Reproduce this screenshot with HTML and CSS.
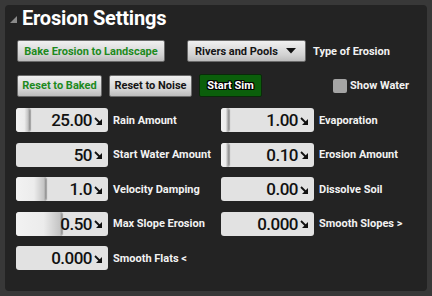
FILE: index.html
```html
<!DOCTYPE html>
<html>
<head>
<meta charset="utf-8">
<link rel="stylesheet" href="styles.css">
</head>
<body>
<div class="panel">
  <div class="title">
    <svg class="tri" width="7" height="7" viewBox="0 0 7 7"><polygon points="7,0 7,7 0,7" fill="#8a8a8a"/></svg>
    <span>Erosion Settings</span>
  </div>
  <div class="row row1">
    <button class="btn green bake">Bake Erosion to Landscape</button>
    <div class="dropdown"><span>Rivers and Pools</span><svg width="10" height="6" viewBox="0 0 10 6"><polygon points="0,0 10,0 5,5.5" fill="#111"/></svg></div>
    <span class="lbl">Type of Erosion</span>
  </div>
  <div class="row row2">
    <button class="btn green rb">Reset to Baked</button>
    <button class="btn rn">Reset to Noise</button>
    <button class="sim">Start Sim</button>
    <span class="check"></span>
    <span class="lbl">Show Water</span>
  </div>
  <div class="fields">
    <div class="field"><div class="box"><div class="thumb" style="width:14px"></div><span class="val">25.00</span><svg class="ic" width="8" height="8" viewBox="0 0 8 8"><path d="M1 1 L6 6" stroke="#111" stroke-width="1.8"/><polygon points="8,2 8,8 2,8" fill="#111"/></svg></div><span class="lbl">Rain Amount</span></div>
    <div class="field"><div class="box"><div class="thumb" style="width:8px"></div><span class="val">1.00</span><svg class="ic" width="8" height="8" viewBox="0 0 8 8"><path d="M1 1 L6 6" stroke="#111" stroke-width="1.8"/><polygon points="8,2 8,8 2,8" fill="#111"/></svg></div><span class="lbl">Evaporation</span></div>
    <div class="field"><div class="box"><span class="val">50</span><svg class="ic" width="8" height="8" viewBox="0 0 8 8"><path d="M1 1 L6 6" stroke="#111" stroke-width="1.8"/><polygon points="8,2 8,8 2,8" fill="#111"/></svg></div><span class="lbl">Start Water Amount</span></div>
    <div class="field"><div class="box"><div class="thumb" style="width:8px"></div><span class="val">0.10</span><svg class="ic" width="8" height="8" viewBox="0 0 8 8"><path d="M1 1 L6 6" stroke="#111" stroke-width="1.8"/><polygon points="8,2 8,8 2,8" fill="#111"/></svg></div><span class="lbl">Erosion Amount</span></div>
    <div class="field"><div class="box"><div class="thumb" style="width:30px"></div><span class="val">1.0</span><svg class="ic" width="8" height="8" viewBox="0 0 8 8"><path d="M1 1 L6 6" stroke="#111" stroke-width="1.8"/><polygon points="8,2 8,8 2,8" fill="#111"/></svg></div><span class="lbl">Velocity Damping</span></div>
    <div class="field"><div class="box"><span class="val">0.00</span><svg class="ic" width="8" height="8" viewBox="0 0 8 8"><path d="M1 1 L6 6" stroke="#111" stroke-width="1.8"/><polygon points="8,2 8,8 2,8" fill="#111"/></svg></div><span class="lbl">Dissolve Soil</span></div>
    <div class="field"><div class="box"><div class="thumb" style="width:46px"></div><span class="val">0.50</span><svg class="ic" width="8" height="8" viewBox="0 0 8 8"><path d="M1 1 L6 6" stroke="#111" stroke-width="1.8"/><polygon points="8,2 8,8 2,8" fill="#111"/></svg></div><span class="lbl">Max Slope Erosion</span></div>
    <div class="field"><div class="box"><span class="val">0.000</span><svg class="ic" width="8" height="8" viewBox="0 0 8 8"><path d="M1 1 L6 6" stroke="#111" stroke-width="1.8"/><polygon points="8,2 8,8 2,8" fill="#111"/></svg></div><span class="lbl">Smooth Slopes &gt;</span></div>
    <div class="field"><div class="box"><span class="val">0.000</span><svg class="ic" width="8" height="8" viewBox="0 0 8 8"><path d="M1 1 L6 6" stroke="#111" stroke-width="1.8"/><polygon points="8,2 8,8 2,8" fill="#111"/></svg></div><span class="lbl">Smooth Flats &lt;</span></div>
  </div>
</div>
</body>
</html>
```
FILE: styles.css
```css
* { box-sizing: border-box; }
html, body { margin: 0; }
body {
  background: #383838;
  padding: 5px;
  font-family: Roboto, "Liberation Sans", sans-serif;
  width: 432px;
  height: 296px;
}
.panel {
  background: #232323;
  border-radius: 4px;
  height: 286px;
  padding: 0 0 0 11px;
}
.title {
  display: flex;
  align-items: center;
  height: 24px;
  padding-top: 1px;
  color: #fff;
  font-size: 20px;
  font-weight: 700;
  letter-spacing: -0.2px;
}
.tri { margin: 4px 5px 0 -6px; }
.row { display: flex; align-items: center; }
.row1 { margin-top: 11px; height: 22px; }
.row2 { margin-top: 12px; height: 23px; }
.btn {
  height: 22px;
  padding: 0;
  border: 1px solid #6a6a6a;
  border-radius: 2px;
  background: linear-gradient(#f0f0f0, #d2d2d2 70%, #bcbcbc);
  font-family: inherit;
  font-size: 11px;
  font-weight: 700;
  color: #151515;
}
.green { color: #1d8a1d; }
.bake { width: 148px; margin-left: 1px; }
.dropdown {
  width: 119px;
  height: 22px;
  margin-left: 22px;
  border: 1px solid #6a6a6a;
  border-radius: 2px;
  background: linear-gradient(#f0f0f0, #d2d2d2 70%, #bcbcbc);
  display: flex;
  align-items: center;
  justify-content: space-between;
  padding: 0 9px 0 7px;
  font-size: 11px;
  font-weight: 700;
  color: #151515;
}
.lbl {
  color: #f2f2f2;
  font-size: 11px;
  font-weight: 700;
  white-space: nowrap;
}
.row1 .lbl { margin-left: 7px; }
.rb { width: 85px; margin-left: 1px; }
.rn { width: 83px; margin-left: 7px; }
.sim {
  width: 63px;
  height: 23px;
  margin-left: 7px;
  padding: 0;
  background: #0b5f0b;
  border: 1px solid #0a2a0a;
  border-radius: 2px;
  color: #fff;
  font-family: inherit;
  font-size: 11px;
  font-weight: 700;
  text-shadow: -1px 0 #000, 1px 0 #000, 0 -1px #000, 0 1px #000, 1px 1px #000, -1px -1px #000, 1px -1px #000, -1px 1px #000;
}
.check {
  width: 14px;
  height: 14px;
  margin-left: 71px;
  margin-right: 3px;
  background: #a4a4a4;
  border-radius: 2px;
}
.fields {
  margin-top: 11px;
  display: grid;
  grid-template-columns: 205px 190px;
  grid-auto-rows: 24px;
  row-gap: 10.5px;
}
.field { display: flex; align-items: center; }
.field:nth-child(even) .box { width: 93px; }
.box {
  position: relative;
  width: 92px;
  height: 24px;
  background: #e2e2e2;
  border-radius: 3px;
  display: flex;
  align-items: center;
  justify-content: flex-end;
  padding-right: 6px;
  margin-right: 5px;
  overflow: hidden;
}
.thumb {
  position: absolute;
  left: 0;
  top: 0;
  bottom: 0;
  background: linear-gradient(90deg, #f2f2f2, #ececec 60%, #c4c4c4 calc(100% - 2px), #8a8a8a);
  border-radius: 3px;
  box-shadow: 1px 0 1px rgba(0,0,0,0.3);
}
.val {
  position: relative;
  font-size: 17px;
  font-weight: 500;
  color: #111;
  margin-right: 2px;
  letter-spacing: -0.5px;
}
.ic { position: relative; margin-top: 1px; }
```
